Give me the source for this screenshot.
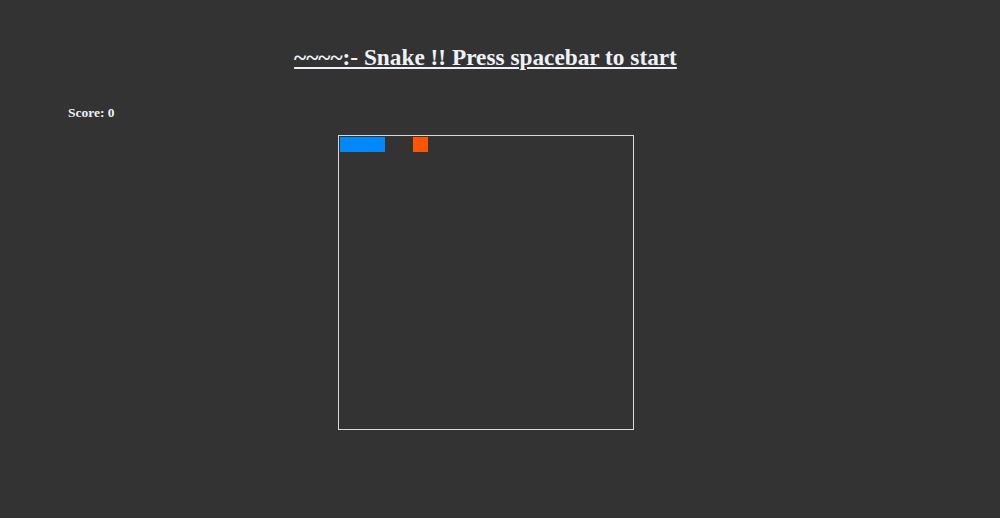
export default function App() {
  return (
    <div className="min-h-[518px] w-full bg-[#333333] font-['Liberation_Serif',serif] text-[#eef2f8]">
      <div className="w-[971px]">
        <h1 className="pt-[43px] text-center text-[23.3px] leading-[28px] font-bold underline">
          ~~~~:- Snake !! Press spacebar to start
        </h1>
        <p className="mt-[34px] pl-[68px] text-[13.5px] leading-[16px] font-bold">
          Score: 0
        </p>
        <div className="relative mt-[14px] ml-[338px] h-[295px] w-[296px] border border-[#d8d8d8]">
          <div className="absolute top-[1px] left-[1px] h-[15px] w-[45px] bg-[#0088ff]" />
          <div className="absolute top-[1px] left-[74px] h-[15px] w-[15px] bg-[#ff5500]" />
        </div>
      </div>
    </div>
  );
}
